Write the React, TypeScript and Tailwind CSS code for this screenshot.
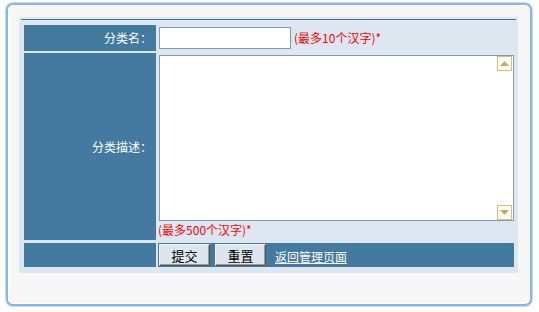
import React from "react";

const font = { fontFamily: '"Noto Sans CJK SC", "Noto Sans", sans-serif' };

function ArrowBox({ up }: { up: boolean }) {
  return (
    <div className="w-[15px] h-[15px] border border-[#d9bf6a] bg-white flex items-center justify-center">
      <svg width="9" height="5" viewBox="0 0 9 5">
        {up ? (
          <polygon points="4.5,0 9,5 0,5" fill="#c9a94e" />
        ) : (
          <polygon points="0,0 9,0 4.5,5" fill="#c9a94e" />
        )}
      </svg>
    </div>
  );
}

export default function App() {
  return (
    <div className="w-[539px] h-[312px] bg-white pt-[3px] pl-[6px]" style={font}>
      <div className="w-[526px] h-[303px] rounded-[7px] border-2 border-[#86b6ec] bg-[#f7f7f7] shadow-[0_0_0_1px_#c4dcf6,inset_0_0_0_1px_#ffffff] pt-[12px] pl-[11px]">
        <div className="w-[499px] h-[256px] bg-[#dce7f1] pt-[2px] px-[2px]">
          <div className="h-[1px] bg-[#4d7494] mx-[0px]" />
          <div className="pt-[5px] pl-[3px] flex flex-col gap-[2px] text-[12px]">
            {/* Row 1 */}
            <div className="flex gap-[2px] h-[26px]">
              <div className="w-[132px] bg-[#447a9f] text-white flex items-center justify-end pr-[4px]">
                分类名：
              </div>
              <div className="w-[356px] flex items-center pl-[1px]">
                <input
                  type="text"
                  className="w-[132px] h-[22px] border border-[#7f9db9] bg-white outline-none"
                />
                <span className="text-[#ff0000] ml-[3px] leading-none">(最多10个汉字)*</span>
              </div>
            </div>
            {/* Row 2 */}
            <div className="flex gap-[2px] h-[187px]">
              <div className="w-[132px] bg-[#447a9f] text-white flex items-center justify-end pr-[4px]">
                分类描述：
              </div>
              <div className="w-[356px] flex flex-col pl-[1px] pt-[2px]">
                <div className="relative w-[355px] h-[166px] border border-[#7f9db9] bg-white">
                  <textarea className="w-full h-full resize-none outline-none overflow-hidden bg-transparent" />
                  <div className="absolute right-[1px] top-0">
                    <ArrowBox up />
                  </div>
                  <div className="absolute right-[1px] bottom-0">
                    <ArrowBox up={false} />
                  </div>
                </div>
                <div className="text-[#ff0000] leading-none mt-[3px] -ml-[1px]">(最多500个汉字)*</div>
              </div>
            </div>
            {/* Row 3 */}
            <div className="flex gap-[2px] h-[24px] mt-[1px]">
              <div className="w-[132px] bg-[#447a9f]" />
              <div className="w-[356px] bg-[#447a9f] flex items-center pl-[1px] gap-[5px]">
                <button className="w-[51px] h-[22px] bg-[#dde6ee] border border-t-[#f4f4f4] border-l-[#f4f4f4] border-r-[#555] border-b-[#555] shadow-[inset_-1px_-1px_0_#9a9a9a] text-[13px] text-black leading-none">
                  提交
                </button>
                <button className="w-[51px] h-[22px] bg-[#dde6ee] border border-t-[#f4f4f4] border-l-[#f4f4f4] border-r-[#555] border-b-[#555] shadow-[inset_-1px_-1px_0_#9a9a9a] text-[13px] text-black leading-none">
                  重置
                </button>
                <a className="text-white underline ml-[4px] mt-[3px] text-[12px]">返回管理页面</a>
              </div>
            </div>
          </div>
        </div>
      </div>
    </div>
  );
}
